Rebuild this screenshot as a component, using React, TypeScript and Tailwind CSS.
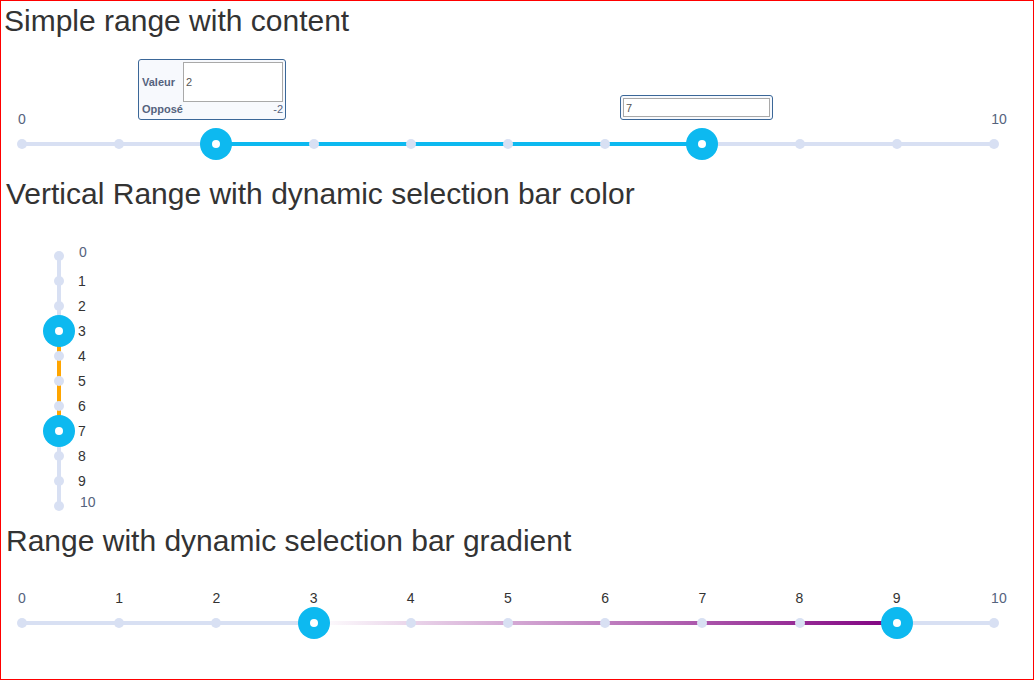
import React from 'react';

const TICKS = Array.from({ length: 11 }, (_, i) => i);

function Handle() {
  return (
    <div className="relative z-20 flex h-8 w-8 shrink-0 items-center justify-center rounded-full bg-[#0db9f0]">
      <div className="h-2 w-2 rounded-full bg-white" />
    </div>
  );
}

// a 10px cell centred on a step of the slider: either a tick dot or a handle
function Step({ handle }: { handle?: boolean }) {
  return (
    <div className="relative z-10 flex h-2.5 w-2.5 shrink-0 items-center justify-center">
      {handle ? <Handle /> : <div className="h-2.5 w-2.5 rounded-full bg-[#d8e0f3]" />}
    </div>
  );
}

function HSlider({
  low,
  high,
  barClass,
  labels
}: {
  low: number;
  high: number;
  barClass: string;
  labels: 'ends' | 'all';
}) {
  return (
    <div className="ml-4 w-[982px]">
      <div className="flex h-4 justify-between text-[14px] leading-4">
        {(labels === 'ends' ? [0, 10] : TICKS).map((i) => (
          <div key={i} className="flex w-2.5 justify-center">
            <span
              className={
                i === 0
                  ? 'whitespace-nowrap text-[#55637d]'
                  : i === 10
                    ? 'translate-x-[5px] whitespace-nowrap text-[#55637d]'
                    : 'whitespace-nowrap text-[#333]'
              }
            >
              {i}
            </span>
          </div>
        ))}
      </div>
      <div className="relative mt-3 flex h-2.5 items-center justify-between">
        <div className="absolute inset-x-[5px] top-[3px] h-1 rounded-sm bg-[#d8e0f3]">
          <div
            className={`absolute inset-y-0 ${barClass}`}
            style={{ left: `${low * 10}%`, width: `${(high - low) * 10}%` }}
          />
        </div>
        {TICKS.map((i) => (
          <Step key={i} handle={i === low || i === high} />
        ))}
      </div>
    </div>
  );
}

function Heading({ children, className = '' }: { children: React.ReactNode; className?: string }) {
  return <h2 className={`text-[30px] leading-[33px] font-normal text-[#333] ${className}`}>{children}</h2>;
}

function SimpleRange() {
  return (
    <section>
      <Heading className="pl-[3px] pt-[3px]">Simple range with content</Heading>
      <div className="relative pt-[74px] pb-[28px]">
        {/* tooltip of the low handle */}
        <div className="absolute left-[137px] top-[22px] z-30 h-[61px] w-[148px] rounded-[3px] border border-[#3b6798] bg-[#f7f9fd] p-[2px]">
          <div className="flex h-10 items-center">
            <span className="w-[42px] pl-[1px] text-[11px] font-bold text-[#55637d]">Valeur</span>
            <input
              readOnly
              value="2"
              className="h-10 w-[100px] border border-[#a9a9a9] bg-white px-[2px] text-[11px] text-[#555] outline-none"
            />
          </div>
          <div className="flex h-[15px] items-center justify-between text-[11px] text-[#55637d]">
            <span className="pl-[1px] font-bold">Opposé</span>
            <span>-2</span>
          </div>
        </div>

        {/* tooltip of the high handle */}
        <div className="absolute left-[619px] top-[58px] z-30 h-[25px] w-[153px] rounded-[3px] border border-[#3b6798] bg-[#f7f9fd] p-[2px]">
          <input
            readOnly
            value="7"
            className="block h-[19px] w-[147px] border border-[#a9a9a9] bg-white px-[2px] text-[11px] text-[#555] outline-none"
          />
        </div>

        <HSlider low={2} high={7} barClass="bg-[#0db9f0]" labels="ends" />
      </div>
    </section>
  );
}

function VerticalRange() {
  return (
    <section>
      <Heading className="pl-[5px]">Vertical Range with dynamic selection bar color</Heading>
      <div className="pt-[40.5px] pb-[13.5px] pl-[53px]">
        <div className="relative flex h-[260px] flex-col justify-between">
          {/* track and the selection from 3 to 7 */}
          <div className="absolute inset-y-[5px] left-[3px] w-1 bg-[#d8e0f3]">
            <div className="absolute inset-x-0 top-[30%] h-[40%] bg-[#ffa500]" />
          </div>
          {TICKS.map((i) => (
            <div key={i} className="flex h-2.5 items-center">
              <Step handle={i === 3 || i === 7} />
              <span
                className={
                  i === 0
                    ? 'ml-[15px] -translate-y-[4px] text-[14px] leading-4 text-[#55637d]'
                    : i === 10
                      ? 'ml-[16px] -translate-y-[4px] text-[14px] leading-4 text-[#55637d]'
                      : 'ml-[14px] text-[14px] leading-4 text-[#333]'
                }
              >
                {i}
              </span>
            </div>
          ))}
        </div>
      </div>
    </section>
  );
}

function GradientRange() {
  return (
    <section>
      <Heading className="pl-[5px]">Range with dynamic selection bar gradient</Heading>
      <div className="pt-[33px]">
        <HSlider low={3} high={9} barClass="bg-[linear-gradient(to_right,#ffffff,#800080)]" labels="all" />
      </div>
    </section>
  );
}

export default function App() {
  return (
    <div className="h-[680px] w-[1034px] overflow-hidden border border-[#ff0000] bg-white font-['Liberation_Sans',Arial,sans-serif]">
      <SimpleRange />
      <VerticalRange />
      <GradientRange />
    </div>
  );
}
